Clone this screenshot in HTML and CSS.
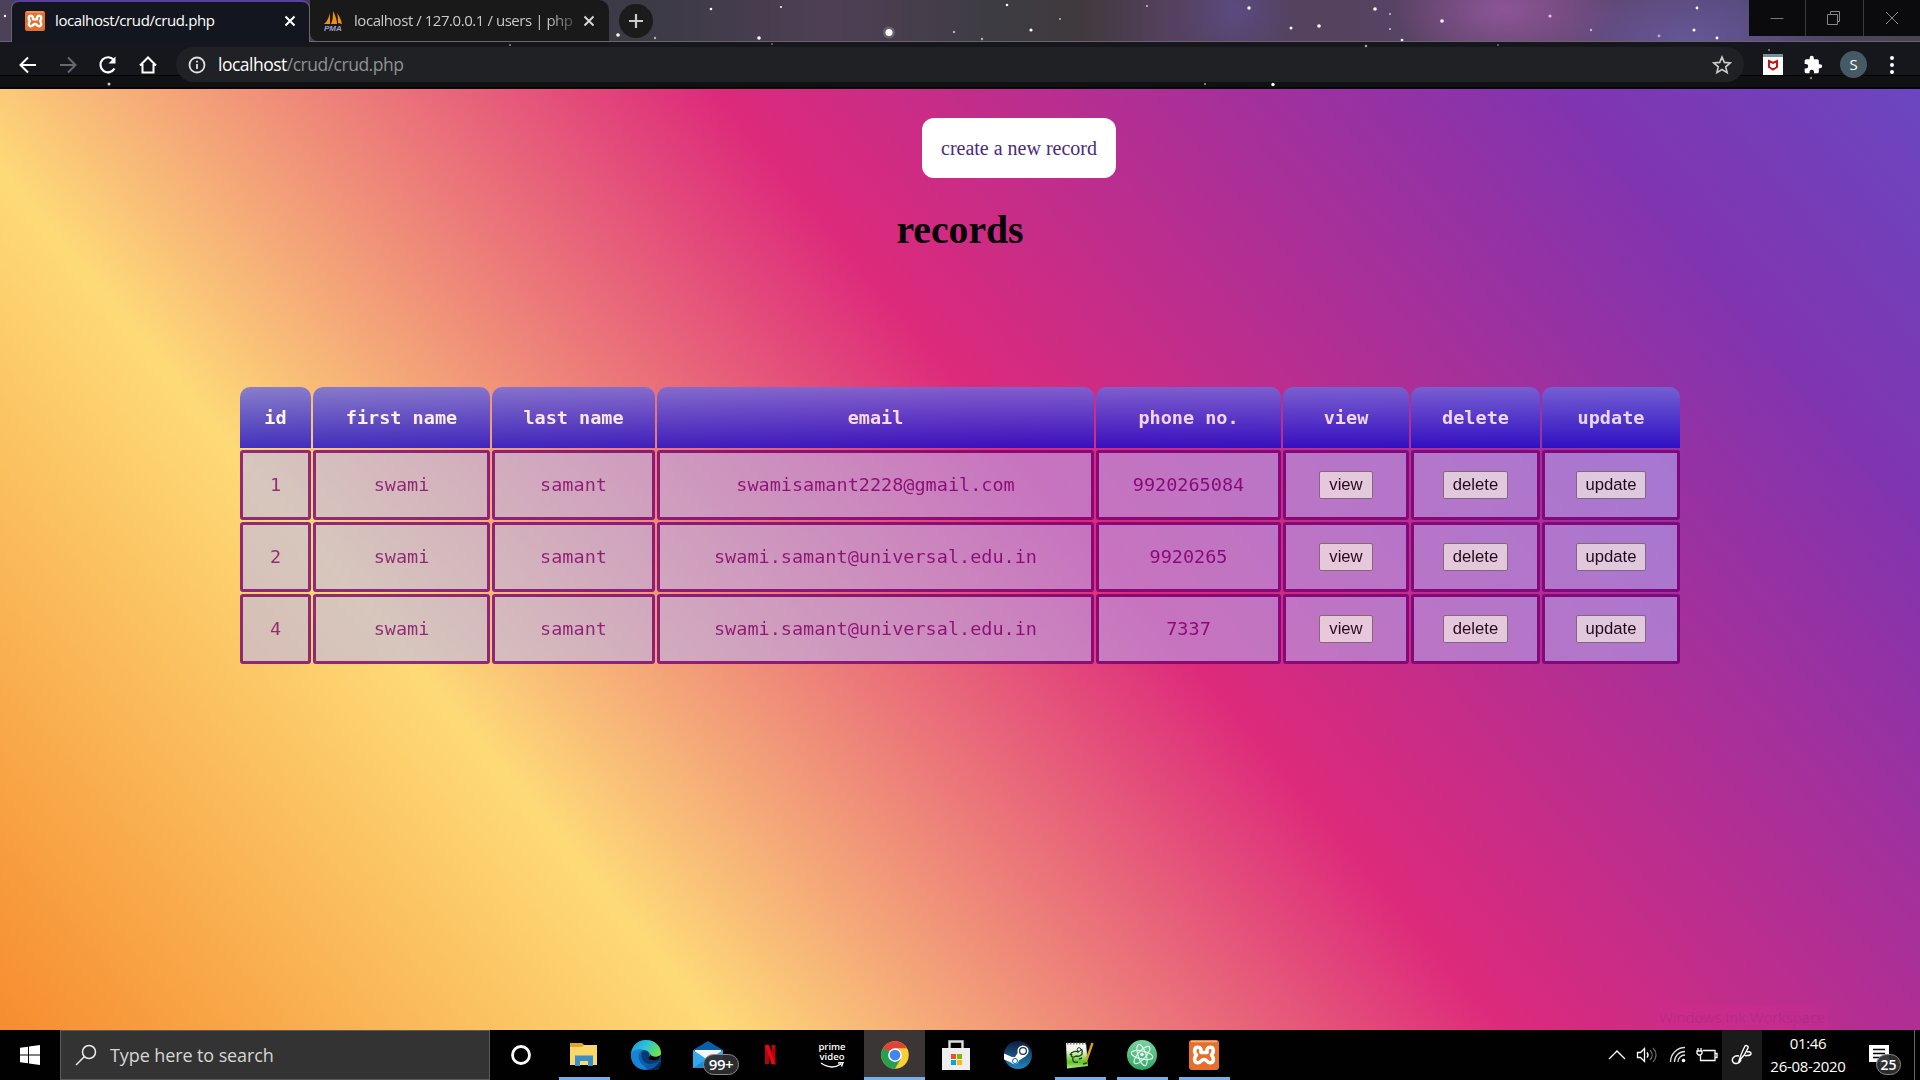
FILE: index.html
```html
<!DOCTYPE html>
<html lang="en">
<head>
<meta charset="utf-8">
<title>localhost/crud/crud.php</title>
<link rel="stylesheet" href="styles.css">
</head>
<body>
<svg class="defs" width="0" height="0">
  <defs>
    <symbol id="xampp" viewBox="0 0 30 30"><rect width="30" height="30" rx="3" fill="#e4712b"/><path d="M2 1.500h26" stroke="#f5b48a" stroke-width="1.500"/><path d="M9 7.200C5 7 4.600 12 7.500 15C4.600 18 5 23 9 22.800C12 22.800 12 19.500 15 19.500S18 22.800 21 22.800C25 23 25.400 18 22.500 15C25.400 12 25 7 21 7.200C17.500 7.200 18 11 18 12.500H12C12 11 12.500 7.200 9 7.200z" fill="none" stroke="#fff" stroke-width="3.600" stroke-linejoin="round"/></symbol>
  </defs>
</svg>
<div class="screen">
  <header class="browser">
    <svg class="stars" width="1920" height="89" fill="#fff">
      <circle cx="618" cy="35" r="1.800"/><circle cx="711" cy="9" r="1.300"/><circle cx="759" cy="38" r="1.800"/><circle cx="781" cy="7" r="1"/><circle cx="889" cy="32.500" r="6" opacity=".18"/><circle cx="889" cy="32.500" r="3.500"/><circle cx="954" cy="32" r="1.200" opacity=".6"/><circle cx="982" cy="39" r="1.200" opacity=".6"/><circle cx="1007" cy="5" r="1.300"/><circle cx="1031" cy="30" r="1.600"/><circle cx="1060" cy="19" r="1.100" opacity=".6"/><circle cx="1147" cy="6" r="1" opacity=".7"/><circle cx="1249" cy="8" r="1.700"/><circle cx="1291" cy="28" r="1.500"/><circle cx="1319" cy="26" r="1.800"/><circle cx="1375" cy="9" r="1.800"/><circle cx="1390" cy="14" r="1" opacity=".7"/><circle cx="1390" cy="29" r="1" opacity=".7"/><circle cx="1402" cy="40" r="1.300"/><circle cx="1366" cy="46" r="1.300" opacity=".6"/><circle cx="1442" cy="21" r="1.800"/><circle cx="1498" cy="45" r="1" opacity=".4"/><circle cx="1550" cy="16" r="1.600" fill="#e9b9ef"/><circle cx="1591" cy="30" r="1.200" opacity=".6"/><circle cx="1659" cy="36" r="1.400" fill="#c9a3e0"/><circle cx="1697" cy="8" r="1.400"/><circle cx="1694" cy="30" r="1.500"/><circle cx="1717" cy="38" r="1.400"/><circle cx="5" cy="16" r="1.200"/><circle cx="655" cy="38" r="1.200" opacity=".6"/>
      <circle cx="109" cy="84" r="1.500" opacity=".8"/><circle cx="1273" cy="84.500" r="1.700"/><circle cx="1205" cy="84" r="1" opacity=".6"/><circle cx="1811" cy="78" r="1.200" opacity=".5"/><circle cx="772" cy="44" r="1" opacity=".4"/><circle cx="1769" cy="50" r="1" opacity=".5"/><circle cx="510" cy="45" r="1" opacity=".5"/>
    </svg>
    <div class="tabstrip">
      <div class="tab tab-active">
        <svg width="20" height="20"><use href="#xampp" width="20" height="20"/></svg>
        <span class="tab-title tab-on">localhost/crud/crud.php</span>
        <svg class="x" width="12" height="12" viewBox="0 0 12 12"><path d="M1.500 1.500l9 9m0-9l-9 9" stroke="#fff" stroke-width="2"/></svg>
      </div>
      <div class="tab tab-idle">
        <svg width="22" height="22" viewBox="0 0 22 22"><path d="M1 14c3-2 5-7 6-11v11zM8 14c2-4 2-9 2-13 2 4 4 8 4 13zM15 13c0-4 0-7-1-10 3 4 4 7 5 11z" fill="#f29111"/><text x="1" y="21" class="pma">PMA</text></svg>
        <span class="tab-title">localhost / 127.0.0.1 / users | php</span>
        <svg class="x" width="12" height="12" viewBox="0 0 12 12"><path d="M1.500 1.500l9 9m0-9l-9 9" stroke="#d8d8d8" stroke-width="1.900"/></svg>
      </div>
      <div class="newtab"><svg width="16" height="16"><path d="M8 1v14M1 8h14" stroke="#ccc" stroke-width="2.200"/></svg></div>
      <div class="winctl">
        <div><svg width="16" height="16"><path d="M1.500 8.500h13" stroke="#777"/></svg></div>
        <div><svg width="16" height="16" fill="none" stroke="#888"><path d="M1.500 4.500h10v10h-10zM4.500 4.500v-3h9v10h-2"/></svg></div>
        <div><svg width="16" height="16"><path d="M2 2l12 12m0-12l-12 12" stroke="#888"/></svg></div>
      </div>
    </div>
    <div class="toolbar">
      <div class="nav">
        <svg width="20" height="20" fill="none" stroke="#fff" stroke-width="2"><path d="M18 10H3M10 2.500L2.500 10l7.500 7.500"/></svg>
        <svg width="20" height="20" fill="none" stroke="#68686a" stroke-width="2"><path d="M2 10h15M10 2.500l7.500 7.500-7.500 7.500"/></svg>
        <svg width="20" height="20" fill="none" stroke="#fff" stroke-width="2.200"><path d="M16.500 13.500A7.500 7.500 0 1 1 15.800 5"/><path d="M17.500 1.500v7h-7z" fill="#fff" stroke="none"/></svg>
        <svg width="20" height="20" fill="none" stroke="#fff" stroke-width="2"><path d="M2 10.500L10 2.500l8 8M4.500 9v8.500h11V9"/></svg>
      </div>
      <div class="omnibox">
        <svg width="18" height="18" fill="none" stroke="#e0e0e0" stroke-width="1.800"><circle cx="9" cy="9" r="7.500"/><path d="M9 8v5M9 4.800v1.800"/></svg>
        <span class="url"><b>localhost</b>/crud/crud.php</span>
        <svg class="fav" width="20" height="20" fill="none" stroke="#ccc" stroke-width="1.600"><path d="M10 2l2.300 5.400 5.900.5-4.500 3.900 1.400 5.800L10 14.500l-5.100 3.100 1.400-5.800-4.500-3.900 5.900-.5z"/></svg>
      </div>
      <div class="exts">
        <svg width="20" height="22"><rect width="20" height="21" fill="#fff"/><rect width="20" height="3" fill="#7790a0"/><path d="M6 7l4 2 4-2v6l-4 2.500L6 13z" fill="none" stroke="#c01818" stroke-width="2"/></svg>
        <svg width="20" height="20" viewBox="0 0 24 24"><path fill="#fff" d="M20.500 11H19V7a2 2 0 0 0-2-2h-4V3.500a2.500 2.500 0 0 0-5 0V5H4a2 2 0 0 0-2 2v3.800h1.500a2.700 2.700 0 0 1 0 5.400H2V20a2 2 0 0 0 2 2h3.800v-1.500a2.700 2.700 0 0 1 5.400 0V22H17a2 2 0 0 0 2-2v-4h1.500a2.500 2.500 0 0 0 0-5z"/></svg>
        <div class="avatar">S</div>
        <svg width="6" height="22" fill="#fff"><circle cx="3" cy="4" r="2"/><circle cx="3" cy="11" r="2"/><circle cx="3" cy="18" r="2"/></svg>
      </div>
    </div>
  </header>

  <main class="page">
    <a class="create">create a new record</a>
    <h1>records</h1>
    <table>
      <colgroup><col class="c-id"><col class="c-first"><col class="c-last"><col class="c-mail"><col class="c-phone"><col class="c-view"><col class="c-del"><col class="c-upd"></colgroup>
      <tr><th>id</th><th>first name</th><th>last name</th><th>email</th><th>phone no.</th><th>view</th><th>delete</th><th>update</th></tr>
      <tr><td>1</td><td>swami</td><td>samant</td><td>swamisamant2228@gmail.com</td><td>9920265084</td><td><button>view</button></td><td><button>delete</button></td><td><button>update</button></td></tr>
      <tr><td>2</td><td>swami</td><td>samant</td><td>swami.samant@universal.edu.in</td><td>9920265</td><td><button>view</button></td><td><button>delete</button></td><td><button>update</button></td></tr>
      <tr><td>4</td><td>swami</td><td>samant</td><td>swami.samant@universal.edu.in</td><td>7337</td><td><button>view</button></td><td><button>delete</button></td><td><button>update</button></td></tr>
    </table>
    <div class="tooltip">Windows Ink Workspace</div>
  </main>

  <footer class="taskbar">
    <div class="start"><svg width="20" height="20" fill="#fff"><path d="M0 2.800l8-1.100v7.800H0zM9 1.500L20 0v9.500H9zM0 10.500h8v7.800l-8-1.100zM9 10.500h11V20L9 18.500z"/></svg></div>
    <div class="search">
      <svg width="22" height="22" fill="none" stroke="#eee" stroke-width="1.500"><circle cx="14" cy="8" r="6.500"/><path d="M9.500 12.500L1 21"/></svg>
      <span>Type here to search</span>
    </div>
    <div class="apps">
      <div class="app cortana"><svg width="30" height="30"><circle cx="15" cy="15" r="8.500" fill="none" stroke="#fff" stroke-width="2.800"/></svg></div>
      <div class="app run"><svg width="30" height="30"><path d="M1 3h12l2 2h13v20H1z" fill="#e2a52b"/><path d="M1 7h12l2-2h13v20H1z" fill="#fbd867"/><path d="M6 26V15.500h18V26h-5v-5h-8v5z" fill="#3a8fc8"/></svg></div>
      <div class="app"><svg width="30" height="30"><defs><linearGradient id="eg" x1="0" y1="0" x2="1" y2=".5"><stop offset="0" stop-color="#1b8fd8"/><stop offset=".5" stop-color="#2cc3d5"/><stop offset="1" stop-color="#6ee34c"/></linearGradient></defs><circle cx="15" cy="15" r="15" fill="#0f5fb0"/><path d="M0 14C1 5 7 0 15 0c9 0 15 6 15 13 0 5-4 7-8 7-3 0-5-1-4-3 2-3 0-7-5-7-6 0-11 2-13 4z" fill="url(#eg)"/><path d="M0 14c2-4 8-6 13-4-6 1-7 8-3 13 2 3 5 5 8 6C8 32-1 24 0 14z" fill="#1784d6"/><path d="M13 10c-5 4-2 14 6 14 4 0 7-1 9-3l2 2V14c-1 4-4 6-8 6-3 0-5-1-4-3 1-2 0-5-5-7z" fill="#083a72"/><path d="M19 24c4 0 7-1 9-3l3 1-4 9h-9l-4-3z" fill="#0d509b" opacity=".5"/><path d="M30 15c-2 5-6 6-9 5-3 0-4-1-3-3 1-1 1-2 1-3 2 3 6 4 11 1z" fill="#000"/></svg></div>
      <div class="app"><svg width="30" height="30"><path d="M0 10L15 1l15 9v18H0z" fill="#0a5ea8"/><path d="M2 10h26v12H2z" fill="#f4f6f8"/><path d="M0 10l15 10 15-10v18H0z" fill="#33a8ec"/><path d="M0 28l14-9 16 9z" fill="#198bd8"/></svg><span class="badge mail">99+</span></div>
      <div class="app"><svg width="30" height="30"><path d="M10 5h4v19l-4 .5zM16.500 5h4v19.500l-4-.5z" fill="#b1060f"/><path d="M10 5h4l6.500 19.500-4-.5z" fill="#e50914"/></svg></div>
      <div class="app prime"><span>prime</span><span>video</span><svg width="26" height="7"><path d="M2 1c7 5 14 5 20 1M19 1l5-.5-1.500 4" fill="none" stroke="#fff" stroke-width="1.500"/></svg></div>
      <div class="app focus"><svg width="30" height="30" viewBox="0 0 48 48"><circle cx="24" cy="24" r="22" fill="#fbce36"/><path d="M24 24L4.900 13A22 22 0 0 1 43 13H24z" fill="#e04335"/><path d="M4.900 13A22 22 0 0 0 24 46l9.500-16.500z" fill="#269f51"/><path d="M4.900 13l9.600 16.500L24 24z" fill="#269f51"/><circle cx="24" cy="24" r="11" fill="#fff"/><circle cx="24" cy="24" r="8.600" fill="#4285f4"/></svg></div>
      <div class="app"><svg width="30" height="30"><path d="M8.500 9V1.500h13V9" fill="none" stroke="#ddd" stroke-width="2.400"/><path d="M1 8h28v22H1z" fill="#eee"/><path d="M10 14h5v5h-5z" fill="#f25022"/><path d="M16 14h5v5h-5z" fill="#7fba00"/><path d="M10 20h5v5h-5z" fill="#00a4ef"/><path d="M16 20h5v5h-5z" fill="#ffb900"/></svg></div>
      <div class="app"><svg width="30" height="30"><defs><linearGradient id="sg" x2="0" y2="1"><stop stop-color="#101b3e"/><stop offset="1" stop-color="#1f86bd"/></linearGradient></defs><circle cx="15" cy="15" r="14" fill="url(#sg)"/><path d="M1 13.500l8 3.500 3 0 4-6 7 5-7 4.500a4.500 4.500 0 0 1-8 2L1 19.500z" fill="#fff"/><circle cx="20" cy="11" r="5.600" fill="#fff"/><circle cx="20" cy="11" r="4" fill="#182f5c"/><circle cx="20" cy="11" r="2.800" fill="#fff"/><circle cx="12" cy="21" r="2.500" fill="none" stroke="#1c6298"/></svg></div>
      <div class="app run"><svg width="30" height="30"><defs><linearGradient id="ng" x2="0" y2="1"><stop stop-color="#f8f8f8"/><stop offset=".3" stop-color="#eef6e4"/><stop offset=".75" stop-color="#5fc51f"/><stop offset="1" stop-color="#b9e89a"/></linearGradient></defs><path d="M1 3h20l2 23-21 2.500z" fill="url(#ng)"/><path d="M2 3.500h19" stroke="#777" stroke-width="2" stroke-dasharray="1.500 1.500"/><path d="M5 15c2-4 6-4 8-3 3-4 5-2 4 0 1 3-3 5-6 4-3 2-6 1-4-2M12 11l4-2M8 18c-1 4 2 5 5 4m1-3l3-1m1 6l4-1" fill="none" stroke="#244718" stroke-width="1.400"/><circle cx="14" cy="9.500" r="1.800" fill="#fff" stroke="#333"/><path d="M27.500 3l-6 17" stroke="#d59a21" stroke-width="2.400"/></svg></div>
      <div class="app run"><svg width="30" height="30"><defs><linearGradient id="ag" x2="0" y2="1"><stop stop-color="#7bd3a2"/><stop offset="1" stop-color="#2fa866"/></linearGradient></defs><circle cx="15" cy="15" r="15" fill="url(#ag)"/><g fill="none" stroke="#e2f6ea" stroke-width="1.200"><ellipse cx="15" cy="15" rx="11" ry="4" transform="rotate(12 15 15)"/><ellipse cx="15" cy="15" rx="11" ry="4" transform="rotate(72 15 15)"/><ellipse cx="15" cy="15" rx="11" ry="4" transform="rotate(132 15 15)"/></g><circle cx="15" cy="14.500" r="1.700" fill="#fff"/></svg></div>
      <div class="app run"><svg width="30" height="30"><use href="#xampp" width="30" height="30"/></svg></div>
    </div>
    <div class="tray">
      <div class="t-up"><svg width="18" height="10"><path d="M1 9l8-8 8 8" fill="none" stroke="#fff" stroke-width="1.400"/></svg></div>
      <div class="t-vol"><svg width="22" height="18" fill="none" stroke="#fff" stroke-width="1.300"><path d="M1.500 6.500h3l4-4v13l-4-4h-3zM11 6.500c1.300 1.500 1.300 3.500 0 5"/><path d="M14 4c2.800 3 2.800 7 0 10M17 2c4 4 4 10 0 14" stroke="#666"/></svg></div>
      <div class="t-wifi"><svg width="18" height="18" fill="none" stroke="#ddd" stroke-width="1.300"><path d="M1.500 16C1.500 8 8 1.500 16 1.500M5.500 16C5.500 10 10 5.500 16 5.500M9 16c0-4 3-7 7-7"/><circle cx="14.500" cy="14.500" r="1.800" fill="#fff" stroke="none"/></svg></div>
      <div class="t-bat"><svg width="22" height="16" fill="none" stroke="#fff" stroke-width="1.300"><path d="M7 3.500h12v10H4.500V8M19.500 6.500h1.500v4h-1.500M2 1v3m3-3v3M1 4h5v2.500L4.500 8h-2L1 6.500z"/></svg></div>
      <div class="t-ink"><svg width="22" height="22" fill="none" stroke="#fff" stroke-width="1.400"><path d="M8 17c1-4 4-11 6-15 1-1 4 0 3 2-2 5-5 9-8 12zM8 12c-5-1-8 3-6 6s7 1 8-2M16 8c4-1 5 2 3 3s-4 0-5 1"/></svg></div>
      <div class="clock"><span>01:46</span><span>26-08-2020</span></div>
      <div class="notif"><svg width="22" height="24"><path d="M1 1h20v17h-5l-4 5v-5H1z" fill="#fff"/><path d="M5 5.500h12M5 9.500h12M5 13.500h8" stroke="#000" stroke-width="1.500"/></svg><span class="badge count">25</span></div>
      <div class="peek"></div>
    </div>
  </footer>
</div>
</body>
</html>
```
FILE: styles.css
```css
* { box-sizing: border-box; }
body { margin: 0; background: #000; font-family: "Open Sans", "Noto Sans", sans-serif; }
svg { display: block; flex: none; }
.defs { position: absolute; }
.screen { width: 1920px; height: 1080px; display: flex; flex-direction: column; overflow: hidden; }

/* browser frame */
.browser { position: relative; height: 89px; background: #13161b; border-bottom: 2px solid #050308; }
.stars { position: absolute; left: 0; top: 0; pointer-events: none; }
.tabstrip {
  height: 42px; display: flex; align-items: flex-start; padding-left: 11px; border-bottom: 1px solid #68656c;
  background:
    radial-gradient(ellipse 110px 60px at 1505px 10px, #8d5596 0, transparent 100%),
    radial-gradient(ellipse 130px 60px at 1690px 40px, #665696 0, transparent 100%),
    radial-gradient(ellipse 60px 60px at 1235px 10px, #5b4a80 0, transparent 100%),
    linear-gradient(90deg, #4b4158 0, #3b3a45 650px, #4f3f55 830px, #3d3c42 1000px, #40393d 1080px, #55415f 1170px, #54425f 1350px, #654673 1560px, #55497b 1720px, #47434f 1920px);
}
.tab { display: flex; align-items: center; height: 41px; color: #c9c9c9; position: relative; font-size: 15px; }
.tab-active { width: 299px; height: 42px; padding: 0 13px 3px 13px; background: #13161e; border: 1px solid #68656c; border-top: 2px solid #5a3f9c; border-bottom: 0; border-radius: 8px 8px 0 0; }
.tab-idle { width: 299px; padding: 0 14px 0 13px; background: #1a1919; border-radius: 0 10px 0 8px; }
.tab-title { margin-left: 10px; white-space: nowrap; letter-spacing: -.4px; line-height: 20px; padding-bottom: 1px; }
.tab-on { color: #fff; }
.tab-idle .tab-title { margin-left: 9px; letter-spacing: -.45px; -webkit-mask-image: linear-gradient(90deg, #000 88%, rgba(0,0,0,.3)); mask-image: linear-gradient(90deg, #000 88%, rgba(0,0,0,.3)); }
.x { margin-left: auto; }
.pma { font: italic bold 8px "Liberation Sans", sans-serif; fill: #a0a0c4; }
.newtab { width: 34px; height: 34px; margin: 4px 0 0 10px; border-radius: 50%; background: #1b1b1b; display: grid; place-items: center; }
.winctl { margin-left: auto; display: flex; width: 171px; height: 36px; background: #0b0a0d; }
.winctl div { flex: 1; display: grid; place-items: center; }
.winctl div + div { border-left: 1px solid #3b3b3f; }

.toolbar { height: 45px; display: flex; align-items: center; background: linear-gradient(#15171c 33px, #000 33px, #000 34px, #0f1113 34px); }
.nav { width: 176px; padding-left: 18px; display: flex; gap: 20px; }
.omnibox { width: 1568px; height: 35px; border-radius: 18px; background: #202124; display: flex; align-items: center; padding: 0 12px; }
.url { margin-left: 12px; font-size: 17.500px; line-height: 24px; letter-spacing: -.5px; color: #8f9193; padding-bottom: 1px; }
.url b { color: #fff; font-weight: 400; }
.fav { margin-left: auto; }
.exts { display: flex; align-items: center; padding-left: 19px; }
.exts svg:nth-child(2) { margin: 0 16px 0 20px; }
.avatar { width: 27px; height: 27px; margin: 0 22px 0 1px; border-radius: 50%; background: #465a66; color: #fff; display: grid; place-items: center; font-size: 15px; line-height: 15px; }

/* page */
.page {
  position: relative; height: 941px; display: flex; flex-direction: column; align-items: center; padding-top: 29px;
  background: linear-gradient(50deg, #f58529 -2.500%, #feda77 26.600%, #dd2a7b 55.500%, #8134af 86.500%, #515bd4 115%);
  font-family: "Liberation Serif", serif;
}
.create { margin-left: 118px; width: 194px; height: 60px; border-radius: 12px; background: #fff; color: #4b2a7d; font-size: 20px; line-height: 61px; text-align: center; }
h1 { margin: 29px 0 0; font-size: 39.700px; line-height: 46px; color: #0a0008; }
table { margin-top: 132px; width: 1444px; table-layout: fixed; border-collapse: separate; border-spacing: 2px; font: 18.500px "DejaVu Sans Mono", monospace; }
.c-id { width: 71px; } .c-first { width: 177px; } .c-last { width: 163px; } .c-mail { width: 437px; }
.c-phone { width: 185px; } .c-view { width: 126px; } .c-del { width: 129px; } .c-upd { width: 138px; }
tr { opacity: .8; }
th { height: 61px; padding: 0; color: #fff; background: linear-gradient(#6d6be0, #1508cc); border-radius: 10px 10px 0 0; }
td { height: 70px; padding: 0 0 2px; text-align: center; color: #780076; background: rgba(180,182,252,.66); border: 3px solid #760076; border-radius: 3px; }
button { font: 16.670px "Liberation Sans", sans-serif; height: 28px; padding: 0 9px; border: 1px solid #767676; border-radius: 2px; background: #efefef; color: #000; display: block; margin: 1px auto 0; line-height: 24px; }
.tooltip { position: absolute; left: 1656px; bottom: 0; width: 172px; height: 25px; background: rgba(220,40,150,.2); color: rgba(110,40,110,.22); font: 15px/24px "Open Sans", sans-serif; letter-spacing: -.2px; text-align: center; white-space: nowrap; }

/* taskbar */
.taskbar { height: 50px; display: flex; background: #020101; color: #fff; }
.start { width: 60px; display: grid; place-items: center; }
.search { width: 430px; background: #333; border: 1px solid #5a5a5a; display: flex; align-items: center; padding-left: 14px; font-size: 18px; color: #d6d6d6; }
.search span { margin-left: 13px; letter-spacing: -.1px; }
.apps { display: flex; }
.app { position: relative; width: 62px; height: 50px; display: flex; align-items: center; justify-content: center; }
.app.cortana { width: 61px; margin-right: 2px; }
.run { background: linear-gradient(#76b0e6, #76b0e6) 6px 47px / 51px 3px no-repeat; }
.app.focus { width: 61px; margin-left: 1px; background: #3b3635; border-bottom: 3px solid #76b0e6; }
.focus svg { margin-top: 3px; }
.prime { flex-direction: column; font-size: 9.500px; line-height: 10px; font-weight: 600; }
.prime span { height: 9px; line-height: 9px; }
.prime span + span { margin-top: 1px; }
.prime svg { margin-top: 1px; }
.badge { position: absolute; display: grid; place-items: center; background: rgba(45,47,49,.94); border: 1px solid #8b8b8b; border-radius: 11px; color: #fff; font-weight: 600; }
.mail { left: 26px; top: 24px; width: 36px; height: 21px; font-size: 15px; line-height: 15px; letter-spacing: -.4px; z-index: 1; }
.tray { margin-left: auto; display: flex; align-items: center; }
.t-up { width: 28px; } .t-vol { width: 33px; } .t-wifi { width: 27px; } .t-bat { width: 26px; }
.t-ink { width: 40px; height: 50px; background: #1b1b1b; display: grid; place-items: center; }
.clock { width: 92px; display: flex; flex-direction: column; text-align: center; font-size: 15px; line-height: 23px; letter-spacing: -.3px; }
.notif { position: relative; width: 60px; height: 50px; padding: 14px 0 0 14px; }
.count { left: 22px; top: 24px; width: 25px; height: 21px; font-size: 14px; line-height: 14px; }
.peek { width: 6px; height: 50px; border-left: 1px solid #666; }
```
